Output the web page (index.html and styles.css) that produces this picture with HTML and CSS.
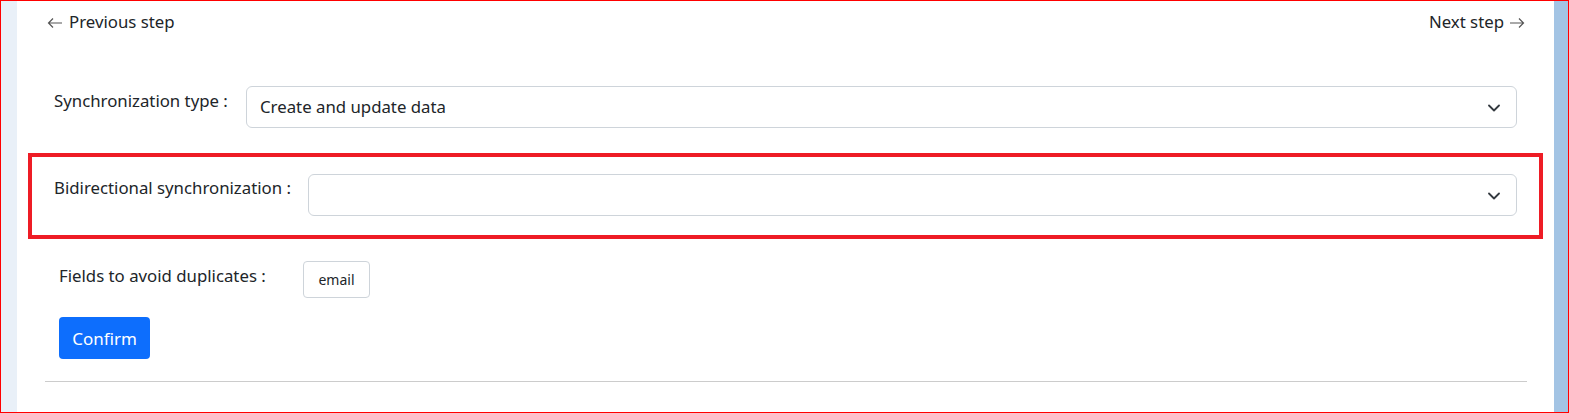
FILE: index.html
```html
<!DOCTYPE html>
<html lang="en">
<head>
<meta charset="utf-8">
<title>Synchronization</title>
<link rel="stylesheet" href="styles.css">
</head>
<body>
<div class="frame">
  <div class="strip-left"></div>
  <div class="main">
    <nav class="steps">
      <a class="step"><svg class="arrow" width="16" height="12" viewBox="0 0 16 12"><path d="M15 6H1.5M6 1.5L1.5 6 6 10.5" fill="none" stroke="#555" stroke-width="1.2"/></svg>Previous step</a>
      <a class="step">Next step<svg class="arrow arrow-r" width="16" height="12" viewBox="0 0 16 12"><path d="M1 6h13.5M10 1.5L14.5 6 10 10.5" fill="none" stroke="#555" stroke-width="1.2"/></svg></a>
    </nav>
    <div class="row row-type">
      <label class="label label-type">Synchronization type :</label>
      <div class="select">
        <span class="select-text">Create and update data</span>
        <svg class="chev" width="12" height="8" viewBox="0 0 12 8"><path d="M1 1.5l5 5 5-5" fill="none" stroke="#343a40" stroke-width="1.8" stroke-linecap="round" stroke-linejoin="round"/></svg>
      </div>
    </div>
    <div class="row row-bidir">
      <label class="label label-bidir">Bidirectional synchronization :</label>
      <div class="select">
        <span class="select-text"></span>
        <svg class="chev" width="12" height="8" viewBox="0 0 12 8"><path d="M1 1.5l5 5 5-5" fill="none" stroke="#343a40" stroke-width="1.8" stroke-linecap="round" stroke-linejoin="round"/></svg>
      </div>
    </div>
    <div class="row row-fields">
      <label class="label label-fields">Fields to avoid duplicates :</label>
      <button class="chip">email</button>
    </div>
    <div class="actions">
      <button class="btn-primary">Confirm</button>
    </div>
    <hr class="sep">
  </div>
  <div class="strip-right"></div>
</div>
</body>
</html>
```
FILE: styles.css
```css
* { box-sizing: border-box; }
html, body { margin: 0; padding: 0; }
body {
  font-family: "Noto Sans", "Open Sans", sans-serif;
  font-size: 16.8px;
  color: #212529;
  background: #fff;
}
.frame {
  width: 1569px;
  height: 413px;
  border: 1px solid #ff0000;
  display: flex;
  overflow: hidden;
}
.strip-left { width: 16px; background: #e9f0f8; flex: none; }
.strip-right { width: 14px; background: #a3c4e4; flex: none; }
.main {
  flex: 1;
  padding: 0 27px 0 28px;
  display: flex;
  flex-direction: column;
}
.steps {
  display: flex;
  justify-content: space-between;
  padding: 9px 2px 0 2px;
  height: 33px;
  line-height: 24px;
}
.step {
  color: #212529;
  text-decoration: none;
  display: flex;
  align-items: center;
  gap: 6px;
}
.arrow { flex: none; margin-top: 1px; }
.arrow-r { margin-left: -1px; }
.row { display: flex; align-items: flex-start; }
.label { line-height: 24px; flex: none; }
.row-type { margin-top: 52px; padding: 0 10px 0 9px; }
.label-type { margin-top: 3px; width: 192px; }
.select {
  flex: 1;
  height: 42px;
  border: 1px solid #ced4da;
  border-radius: 6px;
  display: flex;
  align-items: center;
  justify-content: space-between;
  padding: 0 16px 0 13px;
  background: #fff;
}
.select-text { line-height: 24px; }
.chev { flex: none; margin-top: 2px; }
.row-bidir {
  margin: 25px -16px 0 -17px;
  border: 4px solid #ee1c25;
  padding: 17px 22px 19px 22px;
}
.label-bidir { margin-top: 2px; width: 254px; }
.row-fields { margin-top: 22px; padding-left: 14px; }
.label-fields { margin-top: 3px; width: 244px; }
.chip {
  font-family: inherit;
  font-size: 14px;
  color: #212529;
  background: #fff;
  border: 1px solid #ced4da;
  border-radius: 4px;
  height: 37px;
  width: 67px;
  padding: 0;
}
.actions { margin-top: 19px; padding-left: 14px; }
.btn-primary {
  font-family: inherit;
  font-size: 17px;
  color: #fff;
  background: #0d6efd;
  border: none;
  border-radius: 4px;
  height: 42px;
  width: 91px;
  padding: 0;
}
.sep {
  margin: 22px 0 0 0;
  border: 0;
  border-top: 1px solid #cccccc;
  height: 0;
}
```
